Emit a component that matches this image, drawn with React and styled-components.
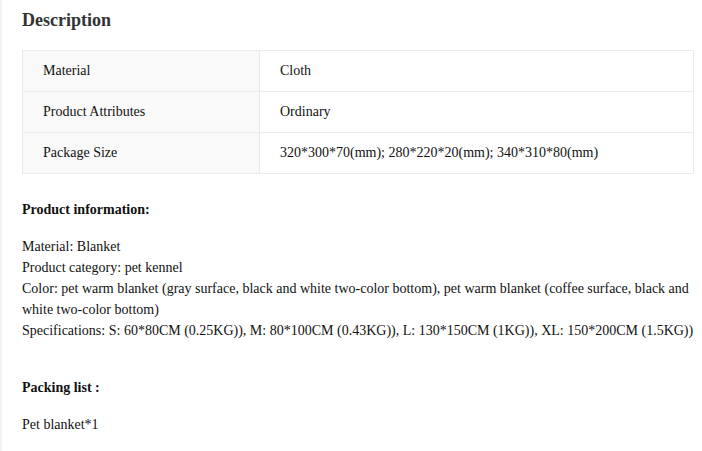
import React from "react";
import styled, { createGlobalStyle } from "styled-components";

const GlobalStyle = createGlobalStyle`
  html, body {
    margin: 0;
    padding: 0;
    background: #ffffff;
  }
`;

const SERIF = `"Liberation Serif", "Times New Roman", serif`;

const ATTRIBUTES = [
  { name: "Material", value: "Cloth" },
  { name: "Product Attributes", value: "Ordinary" },
  {
    name: "Package Size",
    value: "320*300*70(mm); 280*220*20(mm); 340*310*80(mm)",
  },
];

const INFO_LINES = [
  "Material: Blanket",
  "Product category: pet kennel",
  "Color: pet warm blanket (gray surface, black and white two-color bottom), pet warm blanket (coffee surface, black and white two-color bottom)",
  "Specifications: S: 60*80CM (0.25KG)), M: 80*100CM (0.43KG)), L: 130*150CM (1KG)), XL: 150*200CM (1.5KG))",
];

export default function App() {
  return (
    <>
      <GlobalStyle />
      <Page>
        <Heading>Description</Heading>
        <AttrTable>
          <tbody>
            {ATTRIBUTES.map((row) => (
              <tr key={row.name}>
                <NameCell>{row.name}</NameCell>
                <ValueCell>{row.value}</ValueCell>
              </tr>
            ))}
          </tbody>
        </AttrTable>
        <Content>
          <SectionTitle>Product information:</SectionTitle>
          <Paragraph>
            {INFO_LINES.map((line) => (
              <Line key={line}>{line}</Line>
            ))}
          </Paragraph>
          <SectionTitle $spaced>Packing list :</SectionTitle>
          <Paragraph>
            <Line>Pet blanket*1</Line>
          </Paragraph>
        </Content>
      </Page>
    </>
  );
}

const Page = styled.div`
  min-height: 451px;
  box-sizing: border-box;
  border-left: 2px solid #f3f3f3;
  padding: 8px 8px 0 20px;
  font-family: ${SERIF};
  color: #111;
`;

const Heading = styled.h2`
  margin: 0 0 18px;
  font-family: ${SERIF};
  font-size: 18px;
  line-height: 24px;
  font-weight: bold;
  color: #333;
`;

const AttrTable = styled.table`
  width: 672px;
  border-collapse: collapse;
  table-layout: fixed;
  font-family: ${SERIF};
  font-size: 14px;
  color: #111;
`;

const NameCell = styled.td`
  width: 237px;
  height: 41px;
  box-sizing: border-box;
  padding: 0 20px;
  background: #f9f9f9;
  border: 1px solid #ebebeb;
  vertical-align: middle;
`;

const ValueCell = styled.td`
  height: 41px;
  box-sizing: border-box;
  padding: 0 20px;
  background: #fff;
  border: 1px solid #ebebeb;
  vertical-align: middle;
`;

const Content = styled.div`
  width: 672px;
  padding-top: 25px;
  font-family: ${SERIF};
  font-size: 14px;
  line-height: 21px;
`;

const SectionTitle = styled.p`
  margin: ${(p) => (p.$spaced ? "36px" : "0")} 0 16px;
  font-weight: bold;
`;

const Paragraph = styled.p`
  margin: 0;
`;

const Line = styled.span`
  display: block;
`;
